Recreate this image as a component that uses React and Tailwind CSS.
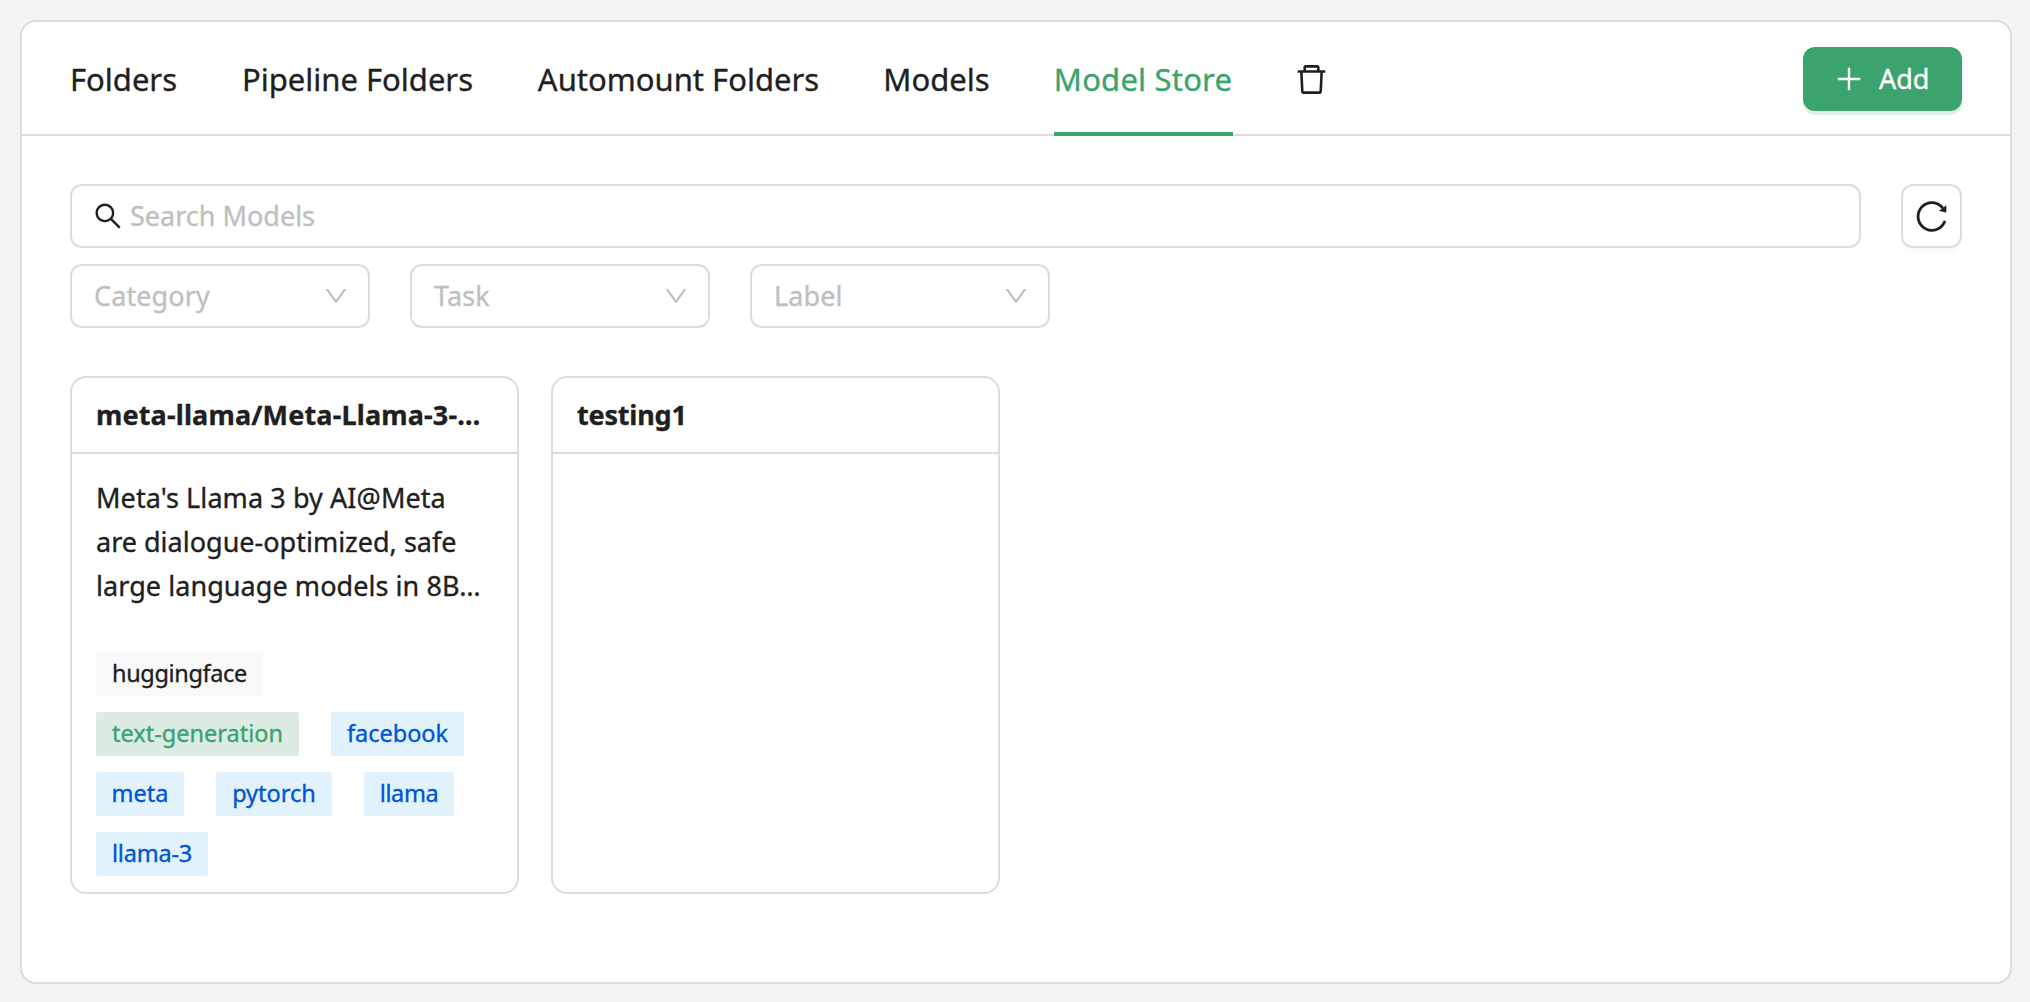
import { AiOutlineDelete, AiOutlineSearch, AiOutlineReload, AiOutlineDown, AiOutlinePlus } from "react-icons/ai";

const tabs = [
  { label: "Folders", size: "w-[108px]" },
  { label: "Pipeline Folders", size: "w-[232px]" },
  { label: "Automount Folders", size: "w-[282px]" },
  { label: "Models", size: "w-[106px]" },
  { label: "Model Store", size: "w-[179px] tracking-[0.2px]", active: true },
];

const gray = "bg-[#f9f9f9] text-[#1f1f1f]";
const green = "bg-[#ddece3] text-[#3ba36e]";
const blue = "bg-[#e1f2fd] text-[#0055d4]";

const tagRows = [
  [{ label: "huggingface", look: gray, size: "w-[167px] tracking-[-0.35px]" }],
  [
    { label: "text-generation", look: green, size: "w-[203px]" },
    { label: "facebook", look: blue, size: "w-[133px]" },
  ],
  [
    { label: "meta", look: blue, size: "w-[88px]" },
    { label: "pytorch", look: blue, size: "w-[116px]" },
    { label: "llama", look: blue, size: "w-[90px] tracking-[-0.4px]" },
  ],
  [{ label: "llama-3", look: blue, size: "w-[112px] tracking-[-0.2px]" }],
];

function Tabs() {
  return (
    <nav className="flex h-full gap-16">
      {tabs.map((t) => (
        <div
          key={t.label}
          className={`-mb-0.5 flex items-center justify-center self-stretch whitespace-nowrap border-b-4 pt-1 text-[31px] ${t.size} ${
            t.active ? "border-[#3ba36e] text-[#3ba36e]" : "border-transparent"
          }`}
        >
          <span className="-ml-px">{t.label}</span>
        </div>
      ))}
      <div className="-ml-1 flex items-center pt-0.5">
        <AiOutlineDelete size={37} />
      </div>
    </nav>
  );
}

function Select({ label }) {
  return (
    <div className="flex h-16 w-[300px] items-center justify-between rounded-xl border-2 border-[#d8dce3] pr-[18px] pl-[22px] text-[#bfbfbf]">
      <span className="tracking-[0.1px]">{label}</span>
      <AiOutlineDown size={28} />
    </div>
  );
}

function Card({ title, children }) {
  return (
    <article className="h-[518px] w-[449px] rounded-2xl border-2 border-[#dcdcdc]">
      <h2 className="flex h-[76px] items-center whitespace-nowrap border-b-2 border-[#dcdcdc] px-6 font-bold">{title}</h2>
      {children}
    </article>
  );
}

export default function App() {
  return (
    <div className="h-[1002px] bg-[#f3f3f3] pt-5 pr-[18px] pl-5 font-['Noto_Sans',sans-serif] text-[27px] text-[#1f1f1f] [-webkit-text-stroke:0.35px]">
      <main className="h-[964px] rounded-2xl border-2 border-[#dcdcdc] bg-white">
        <header className="flex h-[114px] items-center justify-between border-b-2 border-[#dcdcdc] px-12">
          <Tabs />
          <button className="mt-0.5 flex h-16 w-[159px] items-center rounded-xl bg-[#3ba36e] pl-[30px] text-white shadow-[0_4px_0_#e1efe6]">
            <AiOutlinePlus size={32} />
            <span className="ml-3.5">Add</span>
          </button>
        </header>

        <section className="px-12 pt-12">
          <div className="flex gap-10">
            <label className="flex h-16 flex-1 items-center gap-1.5 rounded-xl border-2 border-[#d8dce3] pl-5 text-[#bfbfbf]">
              <AiOutlineSearch size={32} className="text-[#1f1f1f]" />
              <span>Search Models</span>
            </label>
            <button className="flex h-16 w-[61px] items-center justify-center rounded-xl border-2 border-[#d8dce3] shadow-[0_4px_0_rgba(0,0,0,0.02)]">
              <AiOutlineReload size={37} />
            </button>
          </div>
          <div className="mt-4 flex gap-10">
            <Select label="Category" />
            <Select label="Task" />
            <Select label="Label" />
          </div>

          <div className="mt-12 flex gap-8">
            <Card title={<span className="tracking-[0.15px]">meta-llama/Meta-Llama-3-…</span>}>
              <div className="px-6 pt-[22px]">
                <p className="whitespace-nowrap leading-[44px]">
                  <span className="tracking-[0.08px]">Meta's Llama 3 by AI@Meta</span>
                  <br />
                  are dialogue-optimized, safe
                  <br />
                  <span className="tracking-[0.06px]">large language models in 8B…</span>
                </p>
                <div className="mt-11 flex flex-col gap-4">
                  {tagRows.map((row, i) => (
                    <div key={i} className="flex gap-8">
                      {row.map((t) => (
                        <span
                          key={t.label}
                          className={`flex h-11 items-center justify-center whitespace-nowrap rounded-xs text-[23.5px] ${t.look} ${t.size}`}
                        >
                          {t.label}
                        </span>
                      ))}
                    </div>
                  ))}
                </div>
              </div>
            </Card>
            <Card title={<span className="tracking-[-0.2px]">testing1</span>} />
          </div>
        </section>
      </main>
    </div>
  );
}
